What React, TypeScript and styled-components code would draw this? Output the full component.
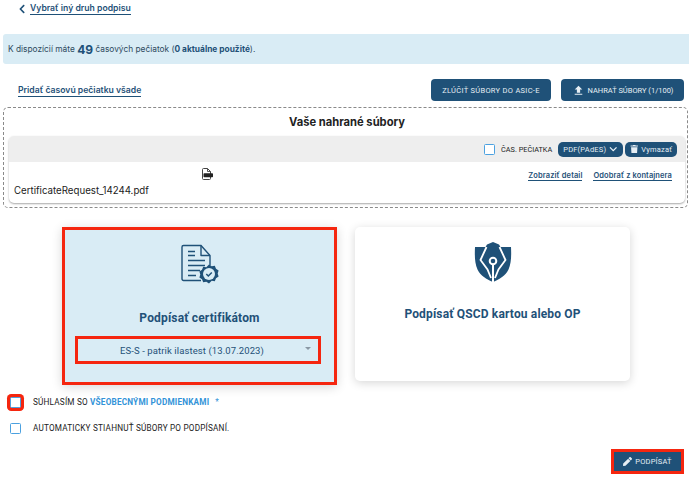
import React from "react";
import styled, { createGlobalStyle } from "styled-components";
import { FaChevronDown, FaChevronLeft, FaPen, FaTrash } from "react-icons/fa";
import { MdFileUpload } from "react-icons/md";

const navy = "#1f5178";

const GlobalStyle = createGlobalStyle`
  html, body {
    margin: 0;
    padding: 0;
    background: #fff;
  }
  * {
    box-sizing: border-box;
  }
`;

const Page = styled.div`
  width: 689px;
  height: 482px;
  overflow: hidden;
  font-family: Inter, "Liberation Sans", sans-serif;
  color: #222;
`;

const BackRow = styled.div`
  height: 34px;
  padding: 3px 0 0 17px;
  display: flex;
  align-items: flex-start;
  gap: 3px;
  color: ${navy};
  svg {
    font-size: 10px;
    margin-top: 1px;
    flex: none;
  }
`;

const NavLink = styled.a`
  font-size: 8.65px;
  line-height: 11px;
  font-weight: 600;
  color: ${navy};
  text-decoration: none;
  border-bottom: 1px solid ${navy};
`;

const InfoBar = styled.div`
  margin-left: 3px;
  height: 30px;
  background: #d9ecf5;
  border-radius: 3px 0 0 3px;
  padding-left: 5px;
  display: flex;
  align-items: center;
  font-size: 8.35px;
  color: #2e4a60;
  white-space: pre;
  b {
    font-weight: 700;
    color: ${navy};
  }
  strong {
    font-size: 12px;
    font-weight: 700;
    color: ${navy};
  }
`;

const ActionRow = styled.div`
  height: 43px;
  padding: 15px 5px 0 18px;
  display: flex;
  align-items: flex-start;
  gap: 10px;
  a {
    margin: 6px auto 0 0;
  }
`;

const ActionButton = styled.button<{ $width: number; $spacing: number }>`
  height: 22px;
  width: ${(p) => p.$width}px;
  padding: 0;
  border: 0;
  border-radius: 4px;
  background: ${navy};
  color: #e6eef4;
  font-family: Roboto, sans-serif;
  font-size: 7.5px;
  letter-spacing: ${(p) => p.$spacing}px;
  display: flex;
  align-items: center;
  justify-content: center;
  gap: 3px;
  white-space: nowrap;
  svg {
    font-size: 13px;
    flex: none;
  }
`;

const UploadBox = styled.section`
  margin: 0 1px 0 3px;
  height: 101px;
  border: 1px dashed #8a8a8a;
  border-radius: 5px;
  padding: 0 2px 4px 5px;
  display: flex;
  flex-direction: column;
`;

const BoxTitle = styled.h2`
  margin: 0;
  height: 28px;
  display: flex;
  align-items: center;
  justify-content: center;
  font-size: 11.2px;
  font-weight: 700;
  color: #222;
`;

const FileCard = styled.div`
  flex: 1;
  border-radius: 5px;
  background: #fff;
  box-shadow: 0 1px 2px rgba(0, 0, 0, 0.35);
  overflow: hidden;
`;

const FileHead = styled.div`
  height: 26px;
  background: #eeeeee;
  padding-right: 8px;
  display: flex;
  align-items: center;
  justify-content: flex-end;
`;

const StampLabel = styled.span`
  font-family: Roboto, sans-serif;
  font-size: 7.3px;
  color: #222;
  margin: 0 4px 0 6px;
`;

const Pill = styled.button`
  height: 15px;
  margin-left: 2px;
  padding: 0 5px;
  border: 0;
  border-radius: 5px;
  background: ${navy};
  color: #e6eef4;
  font-family: Roboto, sans-serif;
  font-size: 7.5px;
  letter-spacing: 0.2px;
  display: flex;
  align-items: center;
  gap: 3px;
  svg {
    font-size: 8.5px;
    flex: none;
  }
`;

const FileBody = styled.div`
  height: 40px;
  display: grid;
  grid-template-columns: 386px 1fr;
  padding: 6px 13px 0 5px;
`;

const FileName = styled.div`
  display: flex;
  flex-direction: column;
  align-items: center;
  font-size: 9.7px;
  color: #222;
  span {
    align-self: flex-start;
    margin-top: 5px;
    line-height: 12px;
  }
`;

const FileLinks = styled.div`
  display: flex;
  justify-content: flex-end;
  gap: 11px;
  padding-top: 3px;
  a {
    font-size: 7.5px;
    line-height: 9px;
    letter-spacing: 0.1px;
    height: 10px;
  }
`;

const CardRow = styled.div`
  height: 181px;
  padding: 19px 0 0 62px;
  display: flex;
  gap: 18px;
  align-items: flex-start;
`;

const SignCard = styled.div<{ $selected?: boolean }>`
  width: 275px;
  height: ${(p) => (p.$selected ? 158 : 154)}px;
  border-radius: ${(p) => (p.$selected ? 0 : 5)}px;
  background: ${(p) => (p.$selected ? "#d9ecf5" : "#fff")};
  border: ${(p) => (p.$selected ? "3px solid #f5260f" : "0")};
  box-shadow: 0 2px 10px rgba(0, 0, 0, 0.16);
  display: flex;
  flex-direction: column;
  align-items: center;
  padding-top: ${(p) => (p.$selected ? 13 : 14)}px;
`;

const CardIcon = styled.div<{ $gap: number }>`
  display: flex;
  margin-bottom: ${(p) => p.$gap}px;
`;

const CardTitle = styled.h3`
  margin: 0;
  font-family: Roboto, sans-serif;
  font-size: 12px;
  line-height: 14px;
  font-weight: 700;
  letter-spacing: 0.15px;
  color: ${navy};
`;

const CertSelect = styled.div`
  position: relative;
  width: 246px;
  height: 28px;
  margin: 11px 3px 0 0;
  padding-right: 12px;
  border: 3px solid #f5260f;
  display: flex;
  align-items: center;
  justify-content: center;
  font-family: Roboto, sans-serif;
  font-size: 9.5px;
  letter-spacing: 0.1px;
  color: ${navy};
  &::after {
    content: "";
    position: absolute;
    right: 7px;
    top: 8px;
    border-left: 3px solid transparent;
    border-right: 3px solid transparent;
    border-top: 3px solid #8a98a4;
  }
`;

const CheckRow = styled.div`
  height: 26px;
  padding-left: 10px;
  display: flex;
  align-items: center;
  gap: 12px;
  font-family: Roboto, sans-serif;
  font-size: 8.2px;
  letter-spacing: 0.2px;
  color: #222;
  a {
    color: #3293d8;
    font-weight: 700;
    text-decoration: none;
  }
  i {
    font-style: normal;
    color: #3293d8;
    margin-left: 6px;
  }
`;

const Check = styled.span<{ $flagged?: boolean }>`
  width: 11px;
  height: 11px;
  flex: none;
  background: #fff;
  border: 1px solid #4ba1e0;
  border-radius: 1.5px;
  box-shadow: ${(p) => (p.$flagged ? "0 0 0 3px #f5260f" : "none")};
`;

const Footer = styled.div`
  display: flex;
  justify-content: flex-end;
  padding: 8px 5px 0 0;
`;

const SignButton = styled.button`
  height: 25px;
  width: 73px;
  border: 3px solid #f5260f;
  background: ${navy};
  color: #e6eef4;
  font-family: Roboto, sans-serif;
  font-size: 7.5px;
  letter-spacing: 0.2px;
  display: flex;
  align-items: center;
  justify-content: center;
  gap: 3px;
  padding: 0;
  svg {
    font-size: 9px;
    flex: none;
  }
`;

const PdfIcon = () => (
  <svg width="12" height="12" viewBox="0 0 12 12">
    <path d="M1.500 1.500a1 1 0 0 1 1-1h4l3 3v7a1 1 0 0 1-1 1h-6a1 1 0 0 1-1-1z" fill="#fff" stroke="#444" strokeWidth="1" />
    <path d="M6.500.5v3h3" fill="none" stroke="#444" strokeWidth="0.9" />
    <rect x="2.500" y="5.200" width="9.500" height="4" rx="0.8" fill="#222" />
  </svg>
);

const DocSealIcon = () => (
  <svg width="38" height="43" viewBox="0 0 38 40" fill="none" stroke={navy} strokeWidth="1.4">
    <path d="M20 36H2.500a1.500 1.500 0 0 1-1.500-1.500V2.500A1.500 1.500 0 0 1 2.500 1H20l9 10v10" />
    <path d="M20 1v10h9" strokeLinejoin="round" />
    <path d="M7 7h7M7 11h7M7 16h17M7 21h17M7 26h12M7 31h8" />
    <path
      d="M28 20l2.700 1.700 3.100-.4 1.200 2.900 2.600 1.800-.9 3 .9 3-2.600 1.800-1.200 2.900-3.100-.4L28 39l-2.700-1.700-3.100.4-1.200-2.900-2.600-1.800.9-3-.9-3 2.600-1.800 1.200-2.900 3.100.4z"
      fill={navy}
      stroke="none"
    />
    <circle cx="28" cy="29.500" r="6" fill="#d9ecf5" stroke="none" />
    <path d="M25.300 29.500l2 2 3.500-3.600" strokeWidth="1.500" />
  </svg>
);

const ShieldPenIcon = () => (
  <svg width="38" height="42" viewBox="0 0 38 42">
    <path
      d="M19 1l6 2.500 1.500 2.500H37c.4 9 .3 16-2.500 22.500C31.500 34.500 25.500 38.500 19 41c-6.500-2.500-12.500-6.500-15.500-12.500C.7 22 .6 15 1 6h10.500L13 3.500z"
      fill={navy}
    />
    <path
      d="M12.500 6 6.500 19l7 9.500 3.500 8.500M25.500 6l6 13-7 9.500-3.500 8.500"
      fill="none"
      stroke="#fff"
      strokeWidth="1.800"
    />
    <circle cx="19" cy="20" r="3.300" fill="none" stroke="#fff" strokeWidth="2" />
    <path d="M19 23.500V41" stroke="#fff" strokeWidth="2" />
  </svg>
);

export default function App() {
  return (
    <Page>
      <GlobalStyle />
      <BackRow>
        <FaChevronLeft />
        <NavLink>Vybrať iný druh podpisu</NavLink>
      </BackRow>
      <InfoBar>
        K dispozícií máte <strong>49</strong> časových pečiatok (<b>0 aktuálne použité</b>).
      </InfoBar>
      <ActionRow>
        <NavLink>Pridať časovú pečiatku všade</NavLink>
        <ActionButton $width={120} $spacing={0.3}>
          ZLÚČIŤ SÚBORY DO ASIC-E
        </ActionButton>
        <ActionButton $width={123} $spacing={0}>
          <MdFileUpload />
          NAHRAŤ SÚBORY (1/100)
        </ActionButton>
      </ActionRow>
      <UploadBox>
        <BoxTitle>Vaše nahrané súbory</BoxTitle>
        <FileCard>
          <FileHead>
            <Check />
            <StampLabel>ČAS. PEČIATKA</StampLabel>
            <Pill>
              PDF(PAdES) <FaChevronDown />
            </Pill>
            <Pill>
              <FaTrash /> Vymazať
            </Pill>
          </FileHead>
          <FileBody>
            <FileName>
              <PdfIcon />
              <span>CertificateRequest_14244.pdf</span>
            </FileName>
            <FileLinks>
              <NavLink>Zobraziť detail</NavLink>
              <NavLink>Odobrať z kontajnera</NavLink>
            </FileLinks>
          </FileBody>
        </FileCard>
      </UploadBox>
      <CardRow>
        <SignCard $selected>
          <CardIcon $gap={25}>
            <DocSealIcon />
          </CardIcon>
          <CardTitle>Podpísať certifikátom</CardTitle>
          <CertSelect>ES-S - patrik ilastest (13.07.2023)</CertSelect>
        </SignCard>
        <SignCard>
          <CardIcon $gap={24}>
            <ShieldPenIcon />
          </CardIcon>
          <CardTitle>Podpísať QSCD kartou alebo OP</CardTitle>
        </SignCard>
      </CardRow>
      <CheckRow>
        <Check $flagged />
        <span>
          SÚHLASÍM SO <a>VŠEOBECNÝMI PODMIENKAMI</a>
          <i>*</i>
        </span>
      </CheckRow>
      <CheckRow>
        <Check />
        <span>AUTOMATICKY STIAHNUŤ SÚBORY PO PODPÍSANÍ.</span>
      </CheckRow>
      <Footer>
        <SignButton>
          <FaPen />
          PODPÍSAŤ
        </SignButton>
      </Footer>
    </Page>
  );
}
